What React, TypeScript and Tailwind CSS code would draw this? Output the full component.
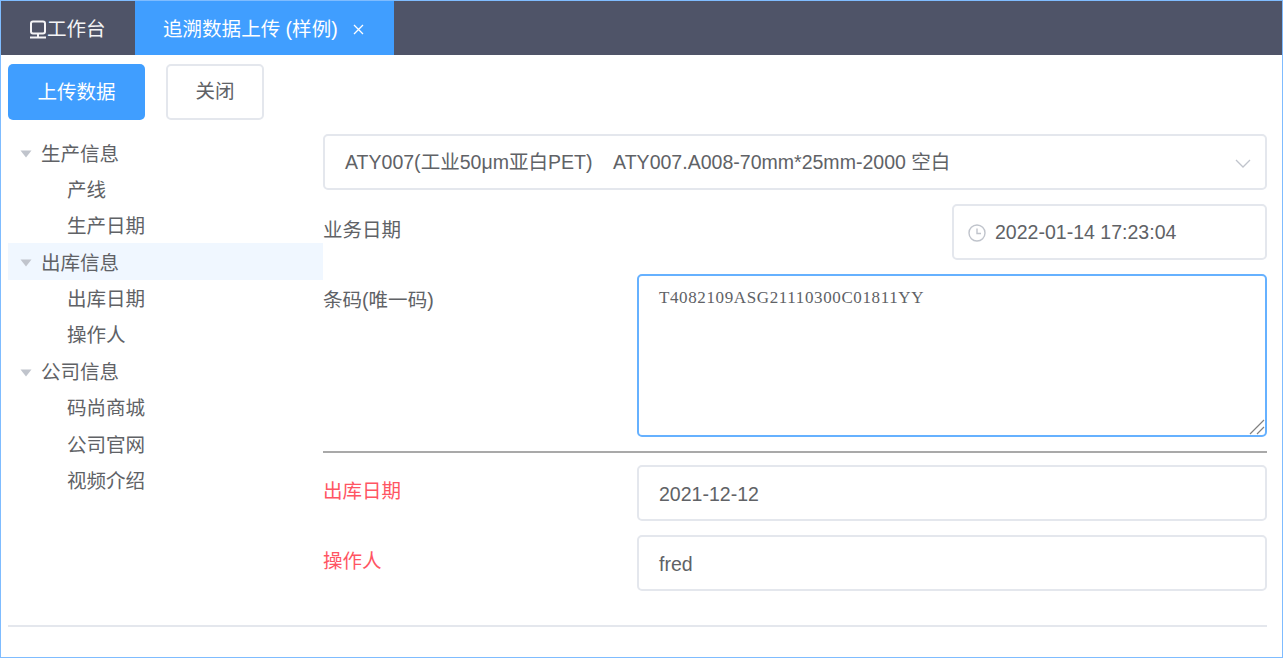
import React from "react";

const FONT = { fontFamily: '"Liberation Sans", "Noto Sans CJK SC", sans-serif' };

function Caret() {
  return (
    <svg width="12" height="8" viewBox="0 0 12 8" className="shrink-0">
      <path d="M0.5 0.5h11L6 7.5z" fill="#c0c4cc" />
    </svg>
  );
}

function Group({ title, items, active }: { title: string; items: string[]; active?: boolean }) {
  return (
    <div>
      <div className={`flex h-[36.4px] items-center gap-[9px] pl-[12px] pt-[4px] ${active ? "bg-[#f0f7ff]" : ""}`}>
        <Caret />
        <span>{title}</span>
      </div>
      {items.map((t) => (
        <div key={t} className="flex h-[36.4px] items-center pl-[59px] pt-[4px]">
          {t}
        </div>
      ))}
    </div>
  );
}

function Row({ label, red, children, className }: { label: string; red?: boolean; children: React.ReactNode; className?: string }) {
  return (
    <div className={`flex items-start justify-between ${className ?? ""}`}>
      <div className={`pt-[10px] leading-[33px] ${red ? "text-[#ff5563]" : ""}`}>{label}</div>
      {children}
    </div>
  );
}

function Box({ className, children }: { className?: string; children: React.ReactNode }) {
  return (
    <div className={`flex h-[56px] items-center rounded-[5px] border-2 border-[#e4e7ed] bg-white ${className ?? ""}`}>
      {children}
    </div>
  );
}

export default function App() {
  return (
    <div style={FONT} className="flex h-[658px] w-[1283px] flex-col overflow-hidden border border-[#7fbcff] bg-white text-[19.55px] text-[#606266]">
      <div className="flex h-[54px] shrink-0 items-stretch bg-[#4f5468] text-white">
        <div className="flex w-[134px] items-center pl-[28px] pt-[3px] text-[#f4f4f6]">
          <svg width="18" height="19" viewBox="0 0 18 19" fill="none" stroke="currentColor" strokeWidth="2" className="shrink-0">
            <rect x="2" y="1.5" width="14" height="12" rx="2" />
            <path d="M9 13.5v4M1 17.5h16" />
          </svg>
          <span>工作台</span>
        </div>
        <div className="flex w-[259px] items-center bg-[#409eff] pl-[28px] pt-[3px]">
          <span>追溯数据上传 (样例)</span>
          <svg width="11" height="11" viewBox="0 0 11 11" className="ml-[15px] shrink-0" stroke="currentColor" strokeWidth="1.3">
            <path d="M1 1l9 9M10 1l-9 9" />
          </svg>
        </div>
      </div>

      <div className="flex gap-[21px] pl-[7px] pt-[9px]">
        <div className="flex h-[56px] w-[137px] items-center justify-center rounded-[5px] bg-[#409eff] pt-[2px] text-white">上传数据</div>
        <div className="flex h-[56px] w-[98px] items-center justify-center rounded-[5px] border-2 border-[#e4e7ed]">关闭</div>
      </div>

      <div className="flex pl-[7px] pr-[15px]">
        <div className="w-[315px] shrink-0 pt-[14px]">
          <Group title="生产信息" items={["产线", "生产日期"]} />
          <Group title="出库信息" items={["出库日期", "操作人"]} active />
          <Group title="公司信息" items={["码尚商城", "公司官网", "视频介绍"]} />
        </div>

        <div className="flex min-w-0 flex-1 flex-col pt-[14px]">
          <Box className="justify-between pl-[20px] pr-[14px] pt-[2px]">
            <span className="whitespace-pre">ATY007(工业50μm亚白PET)    ATY007.A008-70mm*25mm-2000 空白</span>
            <svg width="16" height="9" viewBox="0 0 16 9" fill="none" stroke="#c0c4cc" strokeWidth="1.3" className="shrink-0">
              <path d="M1 1l7 7 7-7" />
            </svg>
          </Box>

          <Row label="业务日期" className="mt-[14px]">
            <Box className="w-[315px] pl-[14px] pt-[2px]">
              <svg width="18" height="18" viewBox="0 0 18 18" fill="none" stroke="#c0c4cc" strokeWidth="1.4" className="mr-[9px] shrink-0">
                <circle cx="9" cy="9" r="8" />
                <path d="M9 4.5V9.5H13" />
              </svg>
              <span>2022-01-14 17:23:04</span>
            </Box>
          </Row>

          <Row label="条码(唯一码)" className="mt-[14px]">
            <div className="relative h-[163px] w-[630px]">
              <textarea
                readOnly
                defaultValue="T4082109ASG21110300C01811YY"
                className="block h-full w-full resize-none rounded-[5px] border-2 border-[#66b1ff] px-[20px] py-[10px] text-[17px] leading-[24px] tracking-[0.62px] text-[#606266] outline-none"
                style={{ fontFamily: '"Liberation Serif", serif' }}
              />
              <svg width="16" height="16" viewBox="0 0 16 16" className="absolute bottom-[2px] right-[2px]" stroke="#808080" strokeWidth="1.2" fill="none">
                <path d="M1 15L15 1M8 15l7-7" />
              </svg>
            </div>
          </Row>

          <div className="mt-[14px] h-[2px] bg-[#a9a9a9]" />

          <Row label="出库日期" red className="mt-[12px]">
            <Box className="w-[630px] pl-[20px] pt-[3px]">2021-12-12</Box>
          </Row>
          <Row label="操作人" red className="mt-[14px]">
            <Box className="w-[630px] pl-[20px] pt-[3px]">fred</Box>
          </Row>
        </div>
      </div>

      <div className="ml-[7px] mr-[15px] mt-[34px] h-[2px] bg-[#e4e7ed]" />
    </div>
  );
}
